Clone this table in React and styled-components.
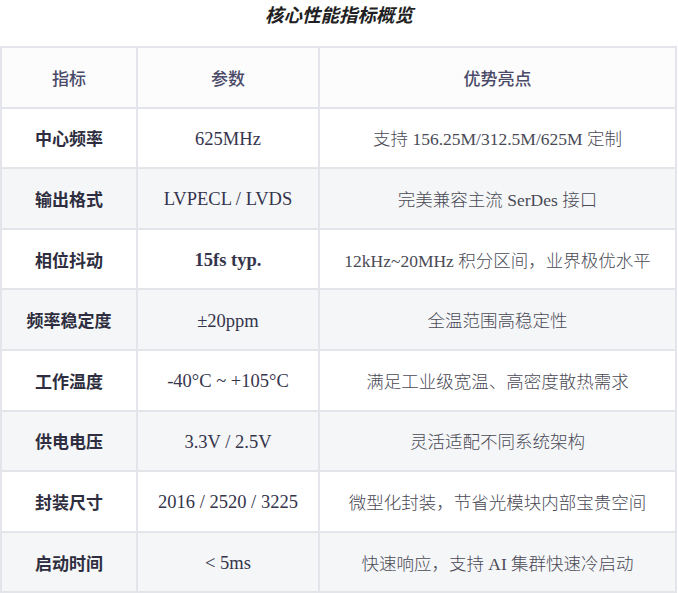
import React from "react";
import styled, { createGlobalStyle } from "styled-components";

const GlobalStyle = createGlobalStyle`
  body {
    margin: 0;
    background: #ffffff;
    font-family: "Liberation Serif", "Noto Sans CJK SC", serif;
  }
`;

const Page = styled.div`
  width: 678px;
`;

const Title = styled.h3`
  margin: 0;
  height: 46px;
  line-height: 29px;
  text-align: center;
  font-family: "Noto Sans CJK SC", sans-serif;
  font-size: 18.5px;
  font-weight: 700;
  font-style: italic;
  color: #1f1f24;
`;

const Table = styled.table`
  width: 677px;
  border-collapse: collapse;
  table-layout: fixed;
  border: 2px solid #e4e5ea;
`;

const Row = styled.tr`
  height: 60.6px;
  background: ${(p) => (p.$striped ? "#f5f6f8" : "#ffffff")};
`;

const HeadRow = styled.tr`
  height: 60.6px;
  background: #fcfcfd;
`;

const Th = styled.th`
  border: 2px solid #e4e5ea;
  padding: 0;
  text-align: center;
  font-family: "Noto Sans CJK SC", sans-serif;
  font-size: 17px;
  font-weight: 500;
  color: #4a4a68;
`;

const NameCell = styled.td`
  border: 2px solid #e4e5ea;
  padding: 0;
  text-align: center;
  font-family: "Noto Sans CJK SC", sans-serif;
  font-size: 17px;
  font-weight: 600;
  color: #2e2e40;
`;

const ValueCell = styled.td`
  border: 2px solid #e4e5ea;
  padding: 3px 0 0;
  text-align: center;
  font-family: "Liberation Serif", "Noto Sans CJK SC", serif;
  font-size: 18.5px;
  font-weight: ${(p) => (p.$bold ? 700 : 400)};
  color: #34344c;
`;

const NoteCell = styled.td`
  border: 2px solid #e4e5ea;
  padding: 0;
  text-align: center;
  font-family: "Liberation Serif", "Noto Sans CJK SC", serif;
  font-size: 17.5px;
  font-weight: 300;
  color: #4a4a56;
`;

const rows = [
  ["中心频率", "625MHz", "支持 156.25M/312.5M/625M 定制"],
  ["输出格式", "LVPECL / LVDS", "完美兼容主流 SerDes 接口"],
  ["相位抖动", "15fs typ.", "12kHz~20MHz 积分区间，业界极优水平", true],
  ["频率稳定度", "±20ppm", "全温范围高稳定性"],
  ["工作温度", "-40°C ~ +105°C", "满足工业级宽温、高密度散热需求"],
  ["供电电压", "3.3V / 2.5V", "灵活适配不同系统架构"],
  ["封装尺寸", "2016 / 2520 / 3225", "微型化封装，节省光模块内部宝贵空间"],
  ["启动时间", "< 5ms", "快速响应，支持 AI 集群快速冷启动"],
];

export default function App() {
  return (
    <Page>
      <GlobalStyle />
      <Title>核心性能指标概览</Title>
      <Table>
        <colgroup>
          <col style={{ width: "136px" }} />
          <col style={{ width: "182px" }} />
          <col />
        </colgroup>
        <thead>
          <HeadRow>
            <Th>指标</Th>
            <Th>参数</Th>
            <Th>优势亮点</Th>
          </HeadRow>
        </thead>
        <tbody>
          {rows.map((r, i) => (
            <Row key={r[0]} $striped={i % 2 === 1}>
              <NameCell>{r[0]}</NameCell>
              <ValueCell $bold={r[3]}>{r[1]}</ValueCell>
              <NoteCell>{r[2]}</NoteCell>
            </Row>
          ))}
        </tbody>
      </Table>
    </Page>
  );
}
